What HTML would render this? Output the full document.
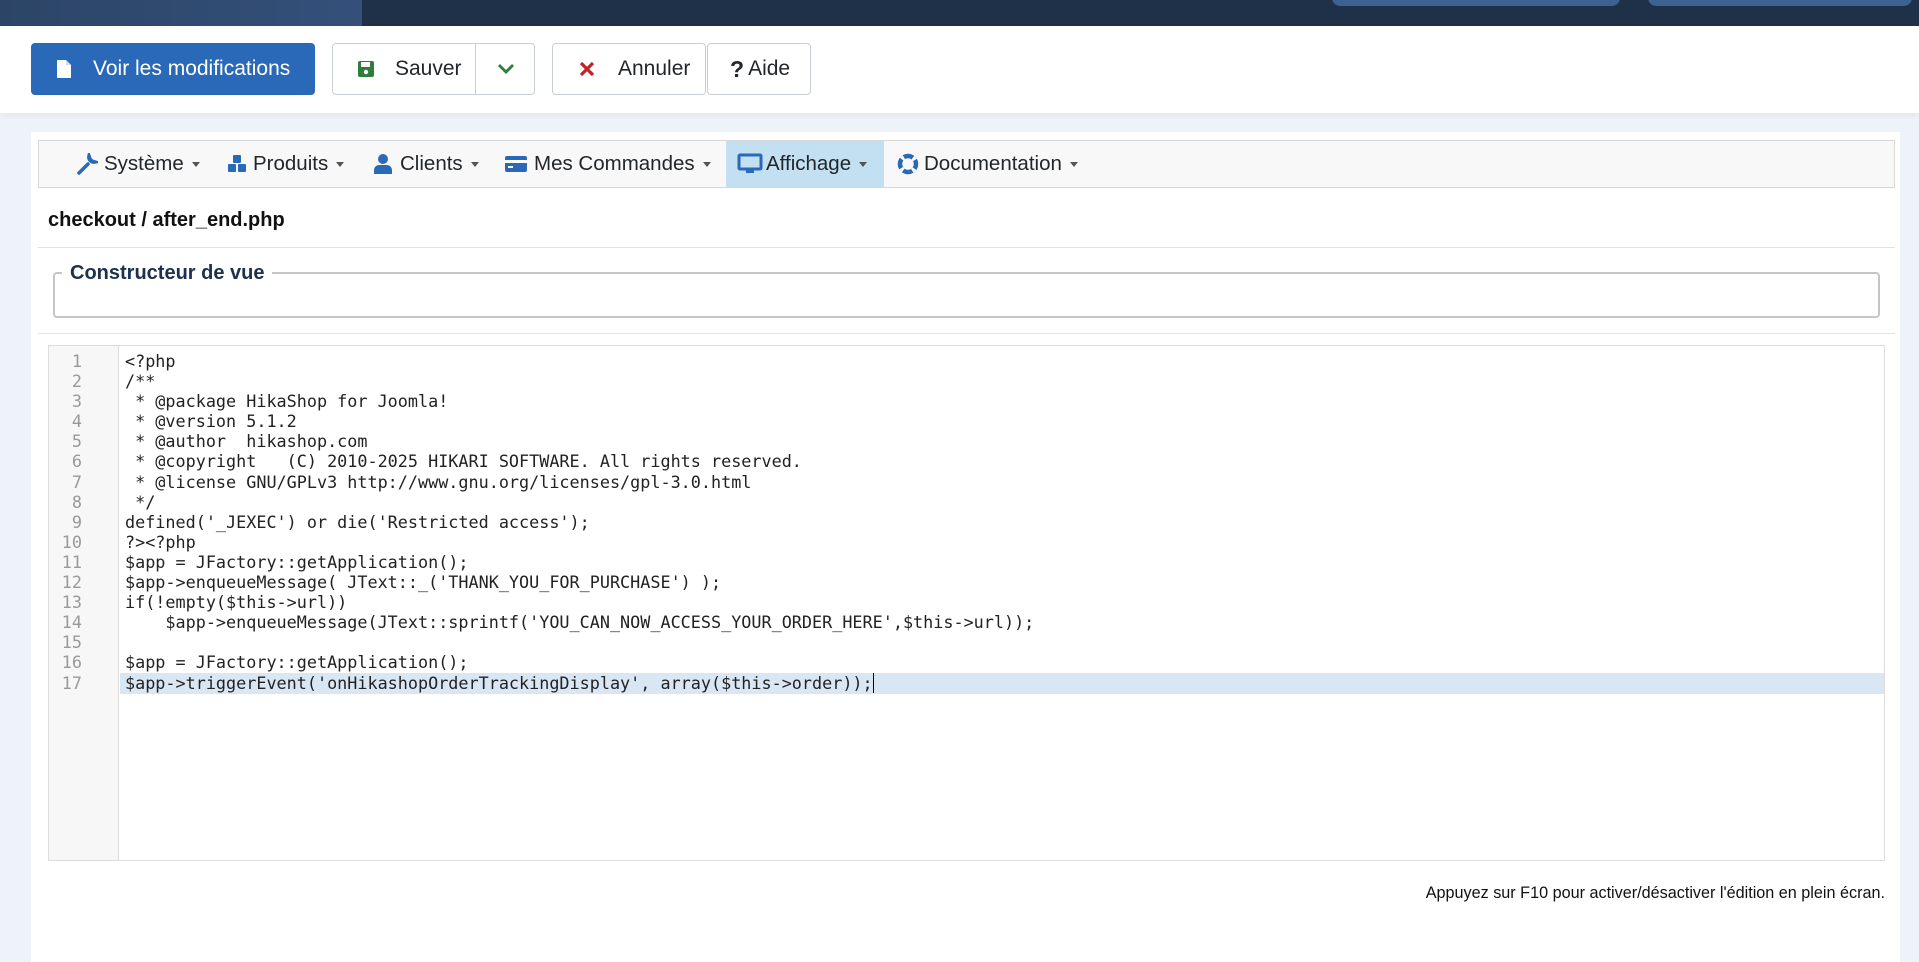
<!DOCTYPE html>
<html><head><meta charset="utf-8"><style>
*{box-sizing:border-box;margin:0;padding:0}
body{width:1919px;height:956px;overflow:hidden;background:#eef2f9;font-family:"Liberation Sans",sans-serif;position:relative}
.a{position:absolute}
.btn{position:absolute;top:43px;height:52px;border:1px solid #c9ced6;border-radius:4px;background:#fff;display:flex;align-items:center;font-size:21px;color:#22262a}
.mi{position:absolute;top:140px;height:47px;display:flex;align-items:center;font-size:20.5px;color:#22262a}
.car{display:inline-block;width:0;height:0;border-left:4px solid transparent;border-right:4px solid transparent;border-top:5px solid #555;margin-left:8px;margin-top:2px}
.code{position:absolute;left:125px;top:351px;font-family:"DejaVu Sans Mono",monospace;font-size:16.8px;line-height:20.1px;white-space:pre;color:#222}
.ln{position:absolute;left:48px;width:34px;top:351px;font-family:"DejaVu Sans Mono",monospace;font-size:16.8px;line-height:20.1px;text-align:right;color:#999}
</style></head><body>
<div class="a" style="left:0;top:0;width:1919px;height:26px;background:#1f3049"></div>
<div class="a" style="left:0;top:0;width:362px;height:26px;background:linear-gradient(90deg,#2c4566,#34507a)"></div>
<div class="a" style="left:1332px;top:-10px;width:288px;height:16px;background:#3d6190;border-radius:8px"></div>
<div class="a" style="left:1648px;top:-10px;width:264px;height:16px;background:#3d6190;border-radius:8px"></div>
<div class="a" style="left:0;top:26px;width:1919px;height:87px;background:#fff;box-shadow:0 3px 6px rgba(0,0,0,0.05)"></div>

<div class="btn" style="left:31px;width:284px;background:#2a69b8;border-color:#2a69b8;color:#fff">
<svg style="margin-left:24px" width="16" height="20" viewBox="0 0 16 20"><path d="M1 1h9l5 5v13H1z" fill="#fff"/><path d="M10 1v5h5" fill="#cfdcef"/></svg>
<span style="margin-left:21px">Voir les modifications</span></div>
<div class="btn" style="left:332px;width:203px">
<svg style="margin-left:24px" width="18" height="18" viewBox="0 0 18 18"><rect x="1" y="1" width="16" height="16" rx="2" fill="#2f7d3a"/><rect x="4" y="2" width="9" height="5" fill="#fff"/><circle cx="9" cy="12" r="2.2" fill="#fff"/></svg>
<span style="margin-left:20px">Sauver</span>
<div style="position:absolute;left:142px;top:0;width:1px;height:50px;background:#c9ced6"></div>
<svg style="position:absolute;left:164px;top:18px" width="18" height="14" viewBox="0 0 18 14"><path d="M2 3l7 7 7-7" stroke="#2f7d3a" stroke-width="2.8" fill="none"/></svg></div>
<div class="btn" style="left:552px;width:154px">
<svg style="margin-left:26px" width="16" height="16" viewBox="0 0 16 16"><path d="M2 2l12 12M14 2L2 14" stroke="#c52127" stroke-width="3.2"/></svg>
<span style="margin-left:23px">Annuler</span></div>
<div class="btn" style="left:707px;width:104px"><span style="margin-left:22px;font-weight:bold;font-size:23px">?</span><span style="margin-left:4px">Aide</span></div>

<div class="a" style="left:31px;top:132px;width:1869px;height:830px;background:#fff"></div>
<div class="a" style="left:38px;top:140px;width:1857px;height:48px;background:#f8f8f8;border:1px solid #d8d8d8"></div>
<div class="a" style="left:726px;top:141px;width:158px;height:46px;background:#c3e0f3"></div>
<div class="mi" style="left:76px"><svg width="22" height="22" viewBox="0 0 22 22"><path d="M3 20l9-9M13 3a5 5 0 0 0 6 6l-3-1-2-2z" stroke="#2a69b8" stroke-width="3.5" fill="#2a69b8" stroke-linecap="round"/></svg><span style="margin-left:6px">Système</span><span class="car"></span></div>
<div class="mi" style="left:226px"><svg width="22" height="22" viewBox="0 0 22 22"><g fill="#2a69b8"><rect x="7" y="2" width="8" height="8" rx="1"/><rect x="2" y="11" width="8" height="8" rx="1"/><rect x="12" y="11" width="8" height="8" rx="1"/></g></svg><span style="margin-left:5px">Produits</span><span class="car"></span></div>
<div class="mi" style="left:373px"><svg width="20" height="22" viewBox="0 0 20 22"><circle cx="10" cy="6" r="5" fill="#2a69b8"/><path d="M1 21v-4a5 5 0 0 1 5-5h8a5 5 0 0 1 5 5v4z" fill="#2a69b8"/></svg><span style="margin-left:7px">Clients</span><span class="car"></span></div>
<div class="mi" style="left:504px"><svg width="24" height="20" viewBox="0 0 24 20"><rect x="1" y="2" width="22" height="16" rx="2" fill="#2a69b8"/><rect x="1" y="6" width="22" height="3" fill="#fff"/><rect x="4" y="12" width="5" height="2" fill="#fff"/></svg><span style="margin-left:6px">Mes Commandes</span><span class="car"></span></div>
<div class="mi" style="left:737px"><svg width="26" height="22" viewBox="0 0 26 22"><rect x="2" y="2" width="22" height="14" rx="1" fill="none" stroke="#2a69b8" stroke-width="3"/><rect x="9" y="17" width="8" height="3" fill="#2a69b8"/></svg><span style="margin-left:3px">Affichage</span><span class="car"></span></div>
<div class="mi" style="left:897px"><svg width="22" height="22" viewBox="0 0 22 22"><circle cx="11" cy="11" r="8" fill="none" stroke="#2a69b8" stroke-width="4.5"/><circle cx="11" cy="11" r="8" fill="none" stroke="#fff" stroke-width="4.5" stroke-dasharray="3 9.57" stroke-dashoffset="-5"/></svg><span style="margin-left:5px">Documentation</span><span class="car"></span></div>

<div class="a" style="left:48px;top:209px;font-size:20px;font-weight:bold;color:#111">checkout / after_end.php</div>
<div class="a" style="left:38px;top:247px;width:1857px;height:1px;background:#e3e3e3"></div>
<div class="a" style="left:53px;top:272px;width:1827px;height:46px;border:2px solid #c6c6c6;border-radius:4px"></div>
<div class="a" style="left:62px;top:262px;padding:0 8px;background:#fff;font-size:20px;font-weight:bold;color:#1c3050">Constructeur de vue</div>
<div class="a" style="left:38px;top:333px;width:1857px;height:1px;background:#e3e3e3"></div>

<div class="a" style="left:48px;top:345px;width:1837px;height:516px;border:1px solid #ddd;background:#fff"></div>
<div class="a" style="left:49px;top:346px;width:70px;height:514px;background:#f7f7f7;border-right:1px solid #ddd"></div>
<div class="a" style="left:120px;top:673px;width:1764px;height:21px;background:#d9e6f4"></div>
<div class="ln">1<br>2<br>3<br>4<br>5<br>6<br>7<br>8<br>9<br>10<br>11<br>12<br>13<br>14<br>15<br>16<br>17</div>
<div class="code">&lt;?php
/**
 * @package HikaShop for Joomla!
 * @version 5.1.2
 * @author  hikashop.com
 * @copyright   (C) 2010-2025 HIKARI SOFTWARE. All rights reserved.
 * @license GNU/GPLv3 http://www.gnu.org/licenses/gpl-3.0.html
 */
defined('_JEXEC') or die('Restricted access');
?&gt;&lt;?php
$app = JFactory::getApplication();
$app-&gt;enqueueMessage( JText::_('THANK_YOU_FOR_PURCHASE') );
if(!empty($this-&gt;url))
    $app-&gt;enqueueMessage(JText::sprintf('YOU_CAN_NOW_ACCESS_YOUR_ORDER_HERE',$this-&gt;url));

$app = JFactory::getApplication();
$app-&gt;triggerEvent('onHikashopOrderTrackingDisplay', array($this-&gt;order));<span style="border-left:1px solid #000"></span></div>
<div class="a" style="right:34px;top:884px;font-size:16.2px;color:#111">Appuyez sur F10 pour activer/désactiver l'édition en plein écran.</div>
</body></html>
